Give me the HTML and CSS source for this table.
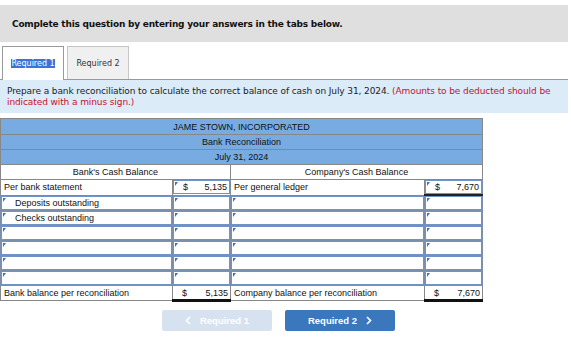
FILE: index.html
```html
<!DOCTYPE html>
<html lang="en">
<head>
  <meta charset="UTF-8" />
  <title>Bank Reconciliation</title>
  <link rel="stylesheet" href="styles.css">
</head>
<body>
  <div class="page">
    <div class="banner">Complete this question by entering your answers in the tabs below.</div>

    <div class="tabs">
      <div class="tab active"><span class="sel">Required 1</span></div>
      <div class="tab">Required 2</div>
    </div>

    <div class="prompt">
      Prepare a bank reconciliation to calculate the correct balance of cash on July 31, 2024.
      <span class="note">(Amounts to be deducted should be indicated with a minus sign.)</span>
    </div>

    <table class="recon">
      <colgroup>
        <col class="c-label">
        <col class="c-amt">
        <col class="c-label2">
        <col class="c-amt">
      </colgroup>
      <tr class="head"><td colspan="4">JAME STOWN, INCORPORATED</td></tr>
      <tr class="head"><td colspan="4">Bank Reconciliation</td></tr>
      <tr class="head"><td colspan="4">July 31, 2024</td></tr>
      <tr class="sub">
        <td colspan="2">Bank's Cash Balance</td>
        <td colspan="2">Company's Cash Balance</td>
      </tr>
      <tr>
        <td class="text">Per bank statement</td>
        <td class="in"><div class="box"><span>$</span><span>5,135</span></div></td>
        <td class="text">Per general ledger</td>
        <td class="in ruled"><div class="box"><span>$</span><span>7,670</span></div></td>
      </tr>
      <tr>
        <td class="in"><div class="box indent">Deposits outstanding</div></td>
        <td class="in"><div class="box"></div></td>
        <td class="in"><div class="box"></div></td>
        <td class="in"><div class="box"></div></td>
      </tr>
      <tr>
        <td class="in"><div class="box indent">Checks outstanding</div></td>
        <td class="in"><div class="box"></div></td>
        <td class="in"><div class="box"></div></td>
        <td class="in"><div class="box"></div></td>
      </tr>
      <tr>
        <td class="in"><div class="box"></div></td>
        <td class="in"><div class="box"></div></td>
        <td class="in"><div class="box"></div></td>
        <td class="in"><div class="box"></div></td>
      </tr>
      <tr>
        <td class="in"><div class="box"></div></td>
        <td class="in"><div class="box"></div></td>
        <td class="in"><div class="box"></div></td>
        <td class="in"><div class="box"></div></td>
      </tr>
      <tr>
        <td class="in"><div class="box"></div></td>
        <td class="in"><div class="box"></div></td>
        <td class="in"><div class="box"></div></td>
        <td class="in"><div class="box"></div></td>
      </tr>
      <tr>
        <td class="in"><div class="box"></div></td>
        <td class="in"><div class="box"></div></td>
        <td class="in"><div class="box"></div></td>
        <td class="in"><div class="box"></div></td>
      </tr>
      <tr class="total">
        <td class="text">Bank balance per reconciliation</td>
        <td class="sum"><div class="amt"><span>$</span><span>5,135</span></div></td>
        <td class="text">Company balance per reconciliation</td>
        <td class="sum"><div class="amt"><span>$</span><span>7,670</span></div></td>
      </tr>
    </table>

    <div class="nav">
      <button class="btn prev" disabled>
        <svg class="chev" width="6" height="9" viewBox="0 0 6 9"><path d="M5 1L1.5 4.5L5 8" fill="none" stroke="#fff" stroke-width="1.6"/></svg>
        Required 1
      </button>
      <button class="btn next">
        Required 2
        <svg class="chev" width="6" height="9" viewBox="0 0 6 9"><path d="M1 1L4.5 4.5L1 8" fill="none" stroke="#fff" stroke-width="1.6"/></svg>
      </button>
    </div>
  </div>
</body>
</html>
```

FILE: styles.css
```css
* {
  box-sizing: border-box;
}
body {
  margin: 0;
  background: #ffffff;
  font-family: "DejaVu Sans", Verdana, sans-serif;
  color: #000;
}
.page {
  width: 568px;
}

.banner {
  margin-top: 5px;
  height: 37px;
  background: #dfdfdf;
  padding-left: 12px;
  display: flex;
  align-items: center;
  font-size: 9px;
  font-weight: bold;
  letter-spacing: -0.22px;
  color: #111;
}

.tabs {
  display: flex;
  gap: 3px;
  padding: 4px 0 0 2px;
}
.tab {
  width: 62px;
  height: 33px;
  display: flex;
  align-items: center;
  justify-content: center;
  font-size: 8px;
  color: #333;
  background: #f0f0f0;
  border: 1px solid #c6c6c6;
  border-bottom: none;
}
.tab.active {
  background: #fff;
  border-color: #999;
  height: 34px;
  margin-bottom: -1px;
  position: relative;
}
.sel {
  background: #3875d7;
  color: #fff;
}

.prompt {
  background: #dcebf8;
  border-top: 1px solid #999;
  padding: 6px 7px 5px;
  font-size: 9px;
  line-height: 11px;
  letter-spacing: -0.1px;
  color: #222;
}
.note {
  color: #c8102e;
}

.recon {
  margin-top: 5px;
  width: 482px;
  border-collapse: collapse;
  font-family: "Liberation Sans", Arial, sans-serif;
  font-size: 9px;
  color: #111;
  table-layout: fixed;
}
.c-label { width: 172px; }
.c-amt { width: 58px; }
.c-label2 { width: 194px; }

.recon td {
  border: 1px solid #888;
  height: 15px;
  padding: 0;
}
.recon .head td {
  background: #78abe1;
  text-align: center;
  height: 15px;
}
.recon .head:first-child td {
  height: 16px;
}
.recon .sub td {
  text-align: center;
  background: #fff;
}
.recon td.text {
  padding-left: 3px;
  white-space: nowrap;
}

/* editable cells: blue frame with a corner marker */
.recon td.in {
  border-color: #7a8fae;
}
.box {
  position: relative;
  height: 14px;
  border: 1px solid #6f93c6;
  display: flex;
  align-items: center;
  justify-content: space-between;
  padding: 0 2px 0 9px;
}
.box::before {
  content: "";
  position: absolute;
  left: 1px;
  top: 1px;
  border-top: 4px solid #3c6fc0;
  border-right: 3px solid transparent;
}
.box.indent {
  padding-left: 13px;
}
.recon td.ruled {
  border-bottom: 2px solid #222;
}

.recon .total td {
  border-color: #888;
}
.recon td.sum {
  border-top: 1px solid #222;
  border-bottom: 3px solid #111;
}
.amt {
  display: flex;
  justify-content: space-between;
  padding: 0 2px 0 9px;
}

.nav {
  display: flex;
  align-items: flex-start;
  gap: 13px;
  padding: 8px 0 0 162px;
}
.btn {
  width: 110px;
  height: 21px;
  border: none;
  border-radius: 2px;
  display: flex;
  align-items: center;
  justify-content: center;
  gap: 9px;
  font-family: "Liberation Sans", Arial, sans-serif;
  font-weight: bold;
  font-size: 9.5px;
  color: #fff;
  background: #3a77bc;
}
.btn.prev {
  background: #d7e2f0;
}
```
